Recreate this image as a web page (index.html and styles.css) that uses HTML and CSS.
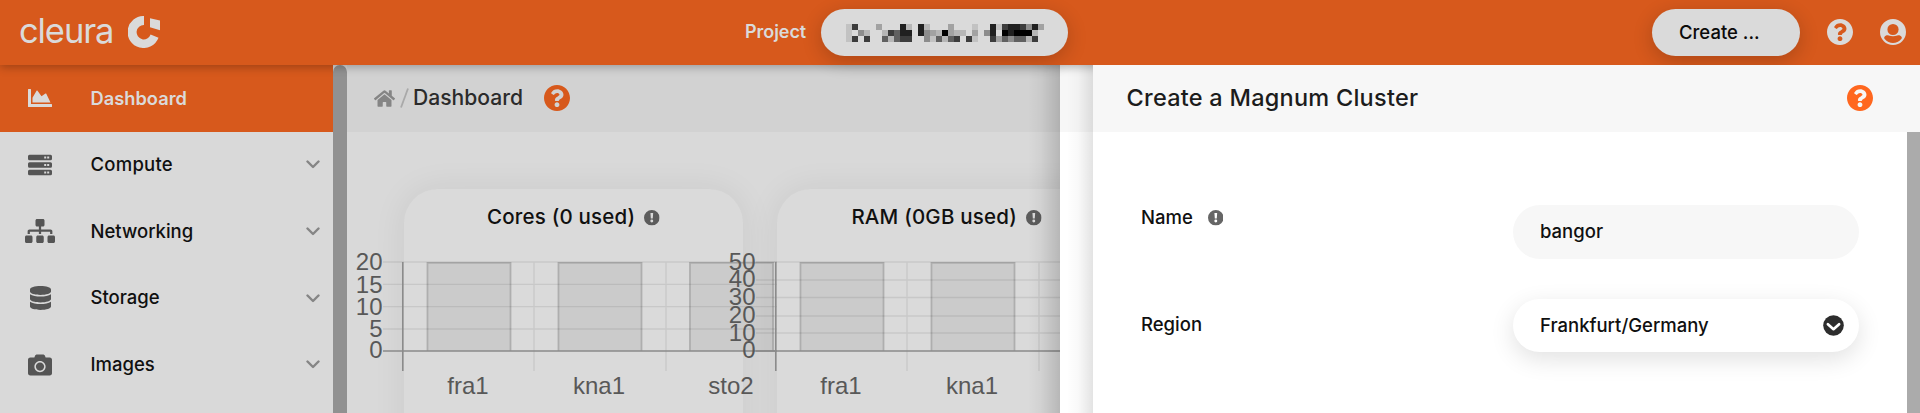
FILE: index.html
```html
<!DOCTYPE html>
<html lang="en">
<head>
<meta charset="utf-8">
<title>Cleura – Create a Magnum Cluster</title>
<link rel="stylesheet" href="styles.css">
</head>
<body>
<svg class="defs" aria-hidden="true">
  <symbol id="question" viewBox="8 8 496 496"><path d="M504 256c0 136.997-111.043 248-248 248S8 392.997 8 256C8 119.083 119.043 8 256 8s248 111.083 248 248zM262.655 90c-54.497 0-89.255 22.957-116.549 63.758-3.536 5.286-2.353 12.415 2.715 16.258l34.699 26.31c5.205 3.947 12.621 3.008 16.665-2.122 17.864-22.658 30.113-35.797 57.303-35.797 20.429 0 45.698 13.148 45.698 32.958 0 14.976-12.363 22.667-32.534 33.976C247.128 238.528 216 254.941 216 296v4c0 6.627 5.373 12 12 12h56c6.627 0 12-5.373 12-12v-1.333c0-28.462 83.186-29.647 83.186-106.667 0-58.002-60.165-102-116.531-102zM256 338c-25.365 0-46 20.635-46 46 0 25.364 20.635 46 46 46s46-20.636 46-46c0-25.365-20.635-46-46-46z"/></symbol>
  <symbol id="info" viewBox="0 0 16 16"><path fill-rule="evenodd" d="M8 0a8 8 0 1 0 0 16A8 8 0 0 0 8 0zM6.600 3h2.800l-.4 5.600H7zM8 9.700a1.500 1.500 0 1 1 0 3a1.500 1.500 0 0 1 0-3z"/></symbol>
  <symbol id="chevron" viewBox="0 0 14 9"><path d="M1.500 1.500L7 7l5.500-5.500" fill="none" stroke="currentColor" stroke-width="2.400" stroke-linecap="round" stroke-linejoin="round"/></symbol>
</svg>

<header class="topbar">
  <div class="logo">
    <span class="logo-word">cleura</span>
    <svg class="logo-mark" viewBox="0 0 32 32"><path d="M16 0v9a7.200 7.200 0 1 0 6.600 9.600l7.900 3.100A16 16 0 1 1 16 0z"/><path d="M22 2.300l10 2.200v9.800l-10-3z"/></svg>
  </div>
  <span class="project-label">Project</span>
  <div class="pill project-pill">
    <svg class="pixels" viewBox="0 0 33 3" shape-rendering="crispEdges">
      <path fill="#c2c2c2" d="M0 0h1v3h-1zM21 0h1v1h-1zM21 2h1v1h-1zM25 0h1v1h-1zM14 2h1v1h-1z"/>
      <path fill="#3c3c3c" d="M1 0h1v1h-1zM1 2h1v1h-1zM3 2h1v1h-1zM18 2h1v1h-1zM20 2h1v1h-1zM26 0h1v1h-1zM29 0h1v1h-1zM24 2h1v1h-1zM31 2h1v1h-1zM7 1h1v1h-1zM9 2h2v1h-2z"/>
      <path fill="#8c8c8c" d="M2 1h1v1h-1zM13 1h1v2h-1zM23 1h1v1h-1zM30 0h1v1h-1zM27 2h1v1h-1z"/>
      <path fill="#b6b6b6" d="M3 1h1v1h-1zM6 1h1v1h-1zM7 2h1v1h-1zM10 0h1v1h-1zM13 0h1v1h-1zM15 1h1v1h-1zM18 1h2v1h-2zM16 2h1v1h-1zM30 2h1v1h-1zM31 1h1v1h-1z"/>
      <path fill="#a2a2a2" d="M5 0h1v1h-1zM14 1h1v1h-1zM17 0h1v2h-1zM21 1h1v1h-1zM32 0h1v1h-1zM25 2h1v1h-1z"/>
      <path fill="#606060" d="M6 2h1v1h-1zM8 1h1v2h-1zM15 2h1v1h-1zM17 2h1v1h-1zM26 2h1v1h-1zM28 2h2v1h-2z"/>
      <path fill="#202020" d="M9 0h1v2h-1zM10 1h1v1h-1zM12 0h1v2h-1zM24 0h1v2h-1zM27 0h2v1h-2zM31 0h1v1h-1zM27 1h1v1h-1z"/>
      <path fill="#000" d="M16 1h1v1h-1zM26 1h1v1h-1zM28 1h3v1h-3z"/>
    </svg>
  </div>
  <button class="pill create-pill">Create ...</button>
  <svg class="top-icon help-icon"><use href="#question"/></svg>
  <svg class="top-icon" viewBox="0 0 26 26"><path fill-rule="evenodd" d="M13 0a13 13 0 1 0 0 26a13 13 0 0 0 0-26zM13 4.900a5.600 5.600 0 1 1 0 11.200a5.600 5.600 0 0 1 0-11.200zM4.300 18.300C5.200 16.600 7 16 8.600 16.500C11.500 17.600 14.500 17.600 17.400 16.500C19 16 20.800 16.600 21.700 18.300C22 19 21.700 19.500 21.300 20C17 25.200 9 25.200 4.700 20C4.300 19.500 4 19 4.300 18.300z"/></svg>
</header>

<div class="body">
  <nav class="sidebar">
    <a class="nav-item active"><span class="nav-icon"><svg width="24" height="24" viewBox="0 0 512 512"><path d="M500 384c6.600 0 12 5.400 12 12v40c0 6.600-5.400 12-12 12H12c-6.600 0-12-5.400-12-12V76c0-6.600 5.400-12 12-12h40c6.600 0 12 5.400 12 12v308h436zM372.700 159.500L288 216l-85.300-113.700c-5.100-6.800-15.500-6.300-19.900 1L96 248v104h384l-89.900-187.800c-3.200-6.500-11.400-8.700-17.400-4.700z"/></svg></span><span class="nav-text">Dashboard</span></a>
    <a class="nav-item"><span class="nav-icon"><svg width="24" height="24" viewBox="0 0 24 24"><path fill-rule="evenodd" d="M1.500 1.700h21a1.500 1.500 0 0 1 1.500 1.500v2.600a1.500 1.500 0 0 1-1.500 1.500h-21a1.500 1.500 0 0 1-1.500-1.500v-2.600a1.500 1.500 0 0 1 1.500-1.500zM16.200 3.500v2h2v-2zM19.200 3.500v2h2v-2zM1.500 9.200h21a1.500 1.500 0 0 1 1.500 1.500v2.600a1.500 1.500 0 0 1-1.500 1.500h-21a1.500 1.500 0 0 1-1.500-1.500v-2.600a1.500 1.500 0 0 1 1.500-1.500zM16.200 11v2h2v-2zM19.200 11v2h2v-2zM1.500 16.700h21a1.500 1.500 0 0 1 1.500 1.500v2.600a1.500 1.500 0 0 1-1.500 1.500h-21a1.500 1.500 0 0 1-1.500-1.500v-2.600a1.500 1.500 0 0 1 1.500-1.500zM16.200 18.500v2h2v-2zM19.200 18.500v2h2v-2z"/></svg></span><span class="nav-text t-comp">Compute</span><svg class="caret"><use href="#chevron"/></svg></a>
    <a class="nav-item"><span class="nav-icon"><svg width="30" height="24" viewBox="0 0 640 512"><path d="M128 352H32c-17.670 0-32 14.330-32 32v96c0 17.670 14.330 32 32 32h96c17.670 0 32-14.330 32-32v-96c0-17.670-14.330-32-32-32zm-24-80h192v48h48v-48h192v48h48v-57.590c0-21.170-17.230-38.410-38.410-38.410H344v-64h40c17.670 0 32-14.330 32-32V32c0-17.670-14.330-32-32-32H256c-17.670 0-32 14.330-32 32v96c0 17.670 14.330 32 32 32h40v64H94.410C73.230 224 56 241.230 56 262.410V320h48v-48zm264 80h-96c-17.670 0-32 14.330-32 32v96c0 17.670 14.330 32 32 32h96c17.670 0 32-14.330 32-32v-96c0-17.670-14.330-32-32-32zm240 0h-96c-17.670 0-32 14.330-32 32v96c0 17.670 14.330 32 32 32h96c17.670 0 32-14.330 32-32v-96c0-17.670-14.330-32-32-32z"/></svg></span><span class="nav-text">Networking</span><svg class="caret"><use href="#chevron"/></svg></a>
    <a class="nav-item"><span class="nav-icon"><svg width="21" height="24" viewBox="0 0 448 512"><path d="M448 73.143v45.714C448 159.143 347.667 192 224 192S0 159.143 0 118.857V73.143C0 32.857 100.333 0 224 0s224 32.857 224 73.143zM448 176v102.857C448 319.143 347.667 352 224 352S0 319.143 0 278.857V176c48.125 33.143 136.208 48.572 224 48.572S399.874 209.143 448 176zm0 160v102.857C448 479.143 347.667 512 224 512S0 479.143 0 438.857V336c48.125 33.143 136.208 48.572 224 48.572S399.874 369.143 448 336z"/></svg></span><span class="nav-text">Storage</span><svg class="caret"><use href="#chevron"/></svg></a>
    <a class="nav-item"><span class="nav-icon"><svg width="24" height="24" viewBox="0 0 512 512"><path d="M512 144v288c0 26.500-21.500 48-48 48H48c-26.500 0-48-21.500-48-48V144c0-26.500 21.500-48 48-48h88l12.300-32.900c7-18.700 24.900-31.100 44.900-31.100h125.500c20 0 37.900 12.400 44.900 31.100L376 96h88c26.500 0 48 21.500 48 48zM376 288c0-66.200-53.800-120-120-120s-120 53.800-120 120 53.800 120 120 120 120-53.800 120-120zm-32 0c0 48.500-39.500 88-88 88s-88-39.500-88-88 39.500-88 88-88 88 39.500 88 88z"/></svg></span><span class="nav-text">Images</span><svg class="caret"><use href="#chevron"/></svg></a>
  </nav>
  <div class="side-scroll"><div class="side-thumb"></div></div>

  <main class="main">
    <div class="crumbs">
      <svg class="home" viewBox="0 32 576 448"><path d="M280.370 148.260L96 300.110V464a16 16 0 0 0 16 16l112.060-.290a16 16 0 0 0 15.920-16V368a16 16 0 0 1 16-16h64a16 16 0 0 1 16 16v95.640a16 16 0 0 0 16 16.050L464 480a16 16 0 0 0 16-16V300L295.670 148.260a12.190 12.190 0 0 0-15.300 0zM571.600 251.470L488 182.560V44.050a12 12 0 0 0-12-12h-56a12 12 0 0 0-12 12v72.610L318.470 43a48 48 0 0 0-61 0L4.340 251.470a12 12 0 0 0-1.600 16.900l25.500 31A12 12 0 0 0 45.150 301l235.220-193.740a12.190 12.190 0 0 1 15.300 0L530.900 301a12 12 0 0 0 16.900-1.600l25.500-31a12 12 0 0 0-1.700-16.930z"/></svg>
      <svg class="slash" viewBox="0 0 9 20"><path d="M8 .5L1 19.500" stroke="#a9a9a9" stroke-width="1.800"/></svg>
      <span class="crumb-text">Dashboard</span>
      <svg class="crumb-help"><use href="#question"/></svg>
    </div>
    <div class="cards">
      <section class="card">
        <h2 class="card-title"><span>Cores (0 used)</span><svg class="info"><use href="#info"/></svg></h2>
        <svg class="chart" viewBox="350 240 450 173">
          <g class="bars"><path d="M427.500 351V262.800h83V351M558.500 351V262.800h83V351M690 351V262.800h83V351"/></g>
          <path class="grid" d="M383 262h394M383 284.300h394M383 306.700h394M383 329h394M534 262v109M666 262v109"/>
          <path class="axis" d="M402.800 262v109M383 351h394"/>
          <g class="ylab"><text x="382.500" y="270.300">20</text><text x="382.500" y="292.500">15</text><text x="382.500" y="314.700">10</text><text x="382.500" y="336.500">5</text><text x="382.500" y="358.300">0</text></g>
          <g class="xlab"><text x="468" y="393.600">fra1</text><text x="599" y="393.600">kna1</text><text x="731" y="393.600">sto2</text></g>
        </svg>
      </section>
      <section class="card">
        <h2 class="card-title"><span>RAM (0GB used)</span><svg class="info"><use href="#info"/></svg></h2>
        <svg class="chart" viewBox="350 240 450 173">
          <g class="bars"><path d="M427.500 351V262.800h83V351M558.500 351V262.800h83V351M690 351V262.800h83V351"/></g>
          <path class="grid" d="M383 262h394M383 280h394M383 297.500h394M383 316h394M383 333h394M534 262v109M666 262v109"/>
          <path class="axis" d="M402.800 262v109M383 351h394"/>
          <g class="ylab"><text x="382.500" y="270.300">50</text><text x="382.500" y="287.300">40</text><text x="382.500" y="305.300">30</text><text x="382.500" y="323">20</text><text x="382.500" y="340.800">10</text><text x="382.500" y="358.300">0</text></g>
          <g class="xlab"><text x="468" y="393.600">fra1</text><text x="599" y="393.600">kna1</text></g>
        </svg>
      </section>
    </div>
    <div class="edge-shade"></div>
  </main>

  <div class="gutter"></div>

  <aside class="panel">
    <div class="panel-head"><h1 class="panel-title">Create a Magnum Cluster</h1><svg class="panel-help"><use href="#question"/></svg></div>
    <div class="panel-body">
      <form class="form">
        <div class="row"><label class="label"><span>Name</span><svg class="info"><use href="#info"/></svg></label><div class="field"><span>bangor</span></div></div>
        <div class="row row-region"><label class="label"><span>Region</span></label><div class="field select"><span>Frankfurt/Germany</span>
          <svg class="select-icon" viewBox="0 0 21 21"><circle cx="10.500" cy="10.500" r="10.300" fill="#2d2d2d"/><path d="M4.900 9.200l5.600 5 5.600-5" fill="none" stroke="#fff" stroke-width="2.700" stroke-linecap="round" stroke-linejoin="round"/></svg></div></div>
      </form>
      <div class="panel-scroll"></div>
    </div>
  </aside>
</div>
</body>
</html>
```

FILE: styles.css
```css
* { box-sizing: border-box; }
body {
  margin: 0;
  width: 1920px;
  height: 413px;
  overflow: hidden;
  font-family: Inter, "Liberation Sans", sans-serif;
  font-weight: 500;
  font-size: 18.5px;
  color: #101010;
  background: #d9d9d9;
}
svg { display: block; flex: none; fill: currentColor; }
span { white-space: nowrap; }
.defs { position: absolute; width: 0; height: 0; }

/* top bar */
.topbar {
  position: relative;
  z-index: 2;
  display: flex;
  align-items: center;
  height: 65px;
  padding: 0 13.500px 1px 19px;
  background: #d7591c;
  color: #dadada;
  box-shadow: 0 2px 9px rgba(0, 0, 0, .28);
  clip-path: inset(0 0 -14px 0);
}
.logo { display: flex; align-items: center; width: 726px; }
.logo-word {
  width: 109px;
  padding-bottom: 3px;
  font-size: 34.500px;
  font-weight: 400;
  line-height: 40px;
  letter-spacing: -1.100px;
}
.logo-mark { width: 32px; height: 32px; }
.project-label { width: 76px; padding-bottom: 1px; font-weight: 600; font-size: 18px; letter-spacing: -.05px; }
.pill {
  height: 47px;
  border: 0;
  border-radius: 24px;
  background: #dadada;
  box-shadow: 0 5px 20px rgba(0, 0, 0, .2);
}
.project-pill { width: 247px; padding: 15px 0 0 25px; }
.pixels { width: 198px; height: 18px; }
.create-pill {
  width: 148px;
  margin-left: 584px;
  padding: 0 0 0 27px;
  text-align: left;
  font: inherit;
  color: #0b0b0b;
}
.top-icon { width: 26px; height: 26px; margin-left: 27px; }
.help-icon { margin-left: 26.500px; }

/* layout */
.body { display: flex; height: 348px; }
.sidebar { width: 333px; flex: none; }
.nav-item { display: flex; align-items: center; height: 66.600px; padding-right: 13px; }
.nav-text { flex: 1; padding-bottom: 1.500px; }
.t-comp { letter-spacing: .25px; }
.nav-item.active { background: #d7591c; color: #dadada; font-weight: 600; font-size: 18.300px; }
.nav-icon { width: 80px; margin-right: 10.500px; display: flex; justify-content: center; color: #555; }
.active .nav-icon { color: #dadada; }
.caret { width: 14px; height: 9px; color: #858585; }
.side-scroll { width: 14px; flex: none; background: #d9d9d9; }
.side-thumb { height: 100%; border-radius: 7px 7px 0 0; background: #919191; }

.main { position: relative; width: 713px; flex: none; overflow: hidden; background: #d9d9d9; }
.crumbs { display: flex; align-items: center; height: 66.500px; padding-left: 27px; background: #d2d2d2; }
.home { width: 21px; height: 17px; color: #858585; }
.slash { width: 9px; height: 20px; margin: 0 4px 0 5px; }
.crumb-text { width: 130.500px; padding-bottom: 2px; font-size: 21.100px; color: #2b2b2b; }
.crumb-help { width: 26px; height: 26px; color: #d7591c; }
.cards { display: flex; gap: 34px; padding: 57.500px 0 0 57px; }
.card {
  width: 339px;
  height: 300px;
  flex: none;
  border-radius: 34px;
  background: #dadada;
  box-shadow: 0 0 34px rgba(0, 0, 0, .07);
}
.card-title {
  display: flex;
  justify-content: center;
  align-items: center;
  gap: 9px;
  margin: 0;
  height: 51px;
  padding: 5px 0 0;
  font-size: 20.500px;
  font-weight: 500;
  letter-spacing: .2px;
}
.card-title span { padding-bottom: 2px; }
.info { width: 15.600px; height: 15.600px; color: #666; }
.card-title .info { margin-top: 2px; color: #5c5c5c; }
.chart { width: 450px; height: 173px; margin-left: -54px; font-family: "Liberation Sans", Arial, sans-serif; font-weight: 400; font-size: 24px; }
.bars path { fill: #cbcbcb; stroke: #aeaeae; stroke-width: 1.800; }
.grid { fill: none; stroke: rgba(0, 0, 0, .08); stroke-width: 1.300; }
.axis { fill: none; stroke: #8b8b8b; stroke-width: 1.600; }
.ylab, .xlab { fill: #585858; }
.ylab { text-anchor: end; }
.xlab { text-anchor: middle; }
.edge-shade { position: absolute; top: 0; right: 0; bottom: 0; width: 32px; background: linear-gradient(to left, rgba(0, 0, 0, .16), rgba(0, 0, 0, .04) 60%, transparent); }

.gutter {
  width: 33px;
  flex: none;
  background:
    linear-gradient(to left, rgba(0, 0, 0, .11), rgba(0, 0, 0, .025) 45%, transparent 80%),
    linear-gradient(#f7f7f7 66.500px, #fff 66.500px);
}

/* slide-in panel */
.panel { position: relative; z-index: 3; width: 827px; flex: none; background: #fff; }
.panel-head { display: flex; align-items: center; justify-content: space-between; height: 66.500px; padding: 0 47px 0 33.500px; background: #f7f7f7; }
.panel-title { margin: 0; padding-bottom: 2px; font-size: 23.500px; font-weight: 500; letter-spacing: .25px; color: #1c1c1c; }
.panel-help { width: 26px; height: 26px; color: #ff671f; }
.panel-body { display: flex; height: 281.500px; }
.form { flex: 1; padding: 73.500px 48px 0 48px; }
.panel-scroll { width: 13px; background: #ababab; }
.row { display: flex; justify-content: space-between; }
.row-region { margin-top: 40px; }
.label { display: flex; align-items: center; gap: 15px; height: 26px; }
.label span, .field span { padding-bottom: 1.500px; }
.row-region .label { height: 53px; }
.field { display: flex; align-items: center; justify-content: space-between; width: 346px; height: 53.500px; padding: 0 15.500px 0 27px; border-radius: 27px; background: #f7f7f7; }
.select { background: #fff; box-shadow: 0 7px 24px rgba(0, 0, 0, .12); }
.select-icon { width: 21px; height: 21px; }
```
